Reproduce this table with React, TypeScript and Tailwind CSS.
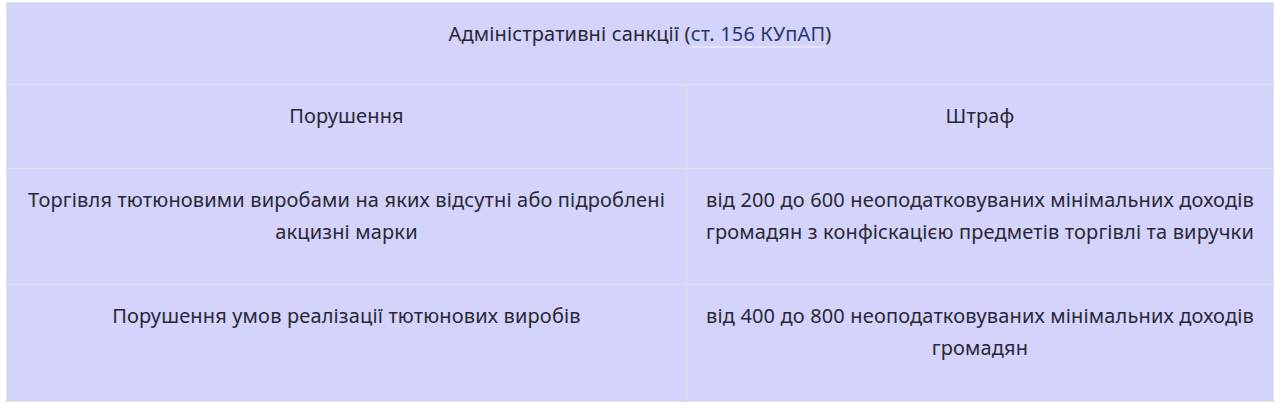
export default function App() {
  const cell = "px-[15px] pt-[15px] pb-[35px] text-center border-[#dedde9]";
  return (
    <div className="bg-white w-[1280px] h-[405px] pl-[6px] pt-[2px]" style={{ fontFamily: '"Noto Sans", sans-serif' }}>
      <div className="w-[1268px] border border-[#e2e2e2] bg-[#d4d3fc] text-[#282834] text-[20px] leading-[32px] tracking-[0.15px]">
        <div className={`${cell} h-[82px] border-b`}>
          Адміністративні санкції (<span className="text-[#24386f] underline decoration-[#e4e4f4] underline-offset-[5px]">ст. 156 КУпАП</span>)
        </div>
        <div className="grid grid-cols-[680px_1fr]">
          <div className={`${cell} h-[84px] border-b border-r`}>Порушення</div>
          <div className={`${cell} h-[84px] border-b`}>Штраф</div>
          <div className={`${cell} h-[116px] border-b border-r`}>
            Торгівля тютюновими виробами на яких відсутні або підроблені акцизні марки
          </div>
          <div className={`${cell} h-[116px] border-b`}>
            від 200 до 600 неоподатковуваних мінімальних доходів громадян з конфіскацією предметів торгівлі та виручки
          </div>
          <div className={`${cell} h-[116px] border-r`}>Порушення умов реалізації тютюнових виробів</div>
          <div className={`${cell} h-[116px]`}>
            від 400 до 800 неоподатковуваних мінімальних доходів громадян
          </div>
        </div>
      </div>
    </div>
  );
}
